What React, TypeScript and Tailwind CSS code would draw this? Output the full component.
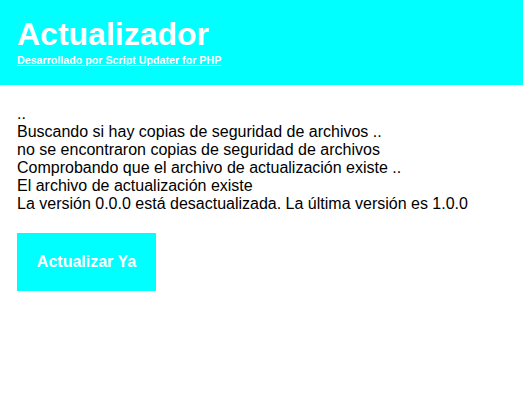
export default function App() {
  const lines = [
    "..",
    "Buscando si hay copias de seguridad de archivos ..",
    "no se encontraron copias de seguridad de archivos",
    "Comprobando que el archivo de actualización existe ..",
    "El archivo de actualización existe",
    "La versión 0.0.0 está desactualizada. La última versión es 1.0.0",
  ];

  return (
    <div className="w-[523px] h-[416px] bg-white font-['Liberation_Sans',Arial,sans-serif] text-black">
      <header className="h-[85px] bg-[#00ffff] px-[17px] pt-[16px]">
        <h1 className="text-[32px] leading-[37px] font-bold text-white">Actualizador</h1>
        <a href="#" className="block mt-[1px] text-[10.7px] leading-[12px] font-bold text-white underline">
          Desarrollado por Script Updater for PHP
        </a>
      </header>
      <main className="px-[17px] pt-[20px]">
        <div className="text-[16px] leading-[18px]">
          {lines.map((line, i) => (
            <div key={i}>{line}</div>
          ))}
        </div>
        <button className="mt-[20px] w-[139px] h-[58px] bg-[#00ffff] text-white font-bold text-[16px]">
          Actualizar Ya
        </button>
      </main>
    </div>
  );
}
